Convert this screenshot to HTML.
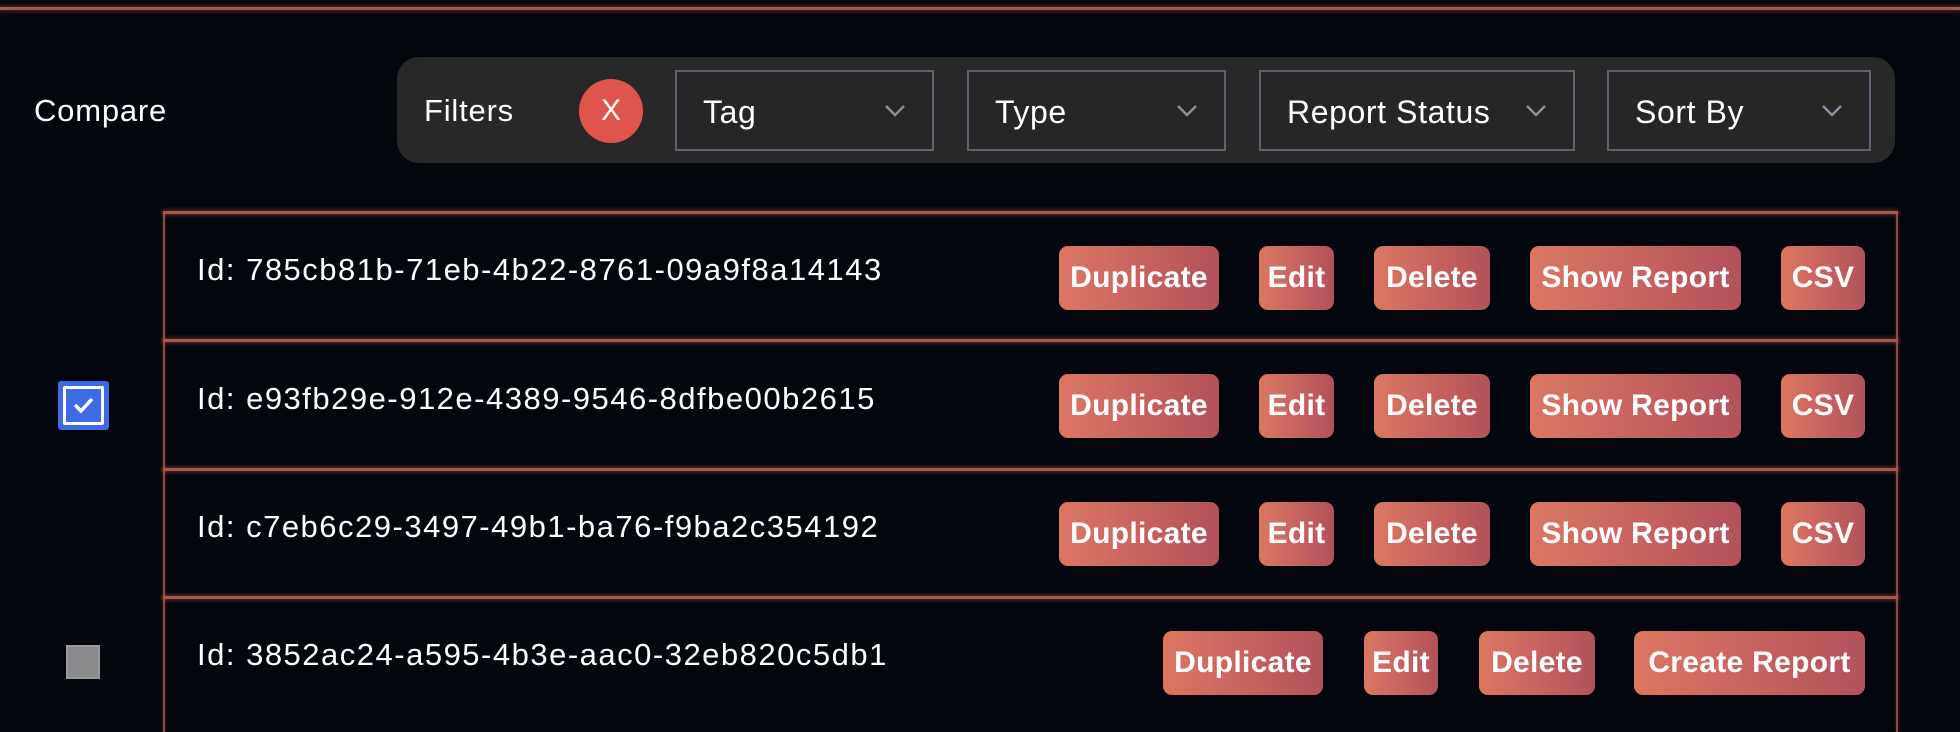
<!DOCTYPE html>
<html><head><meta charset="utf-8"><style>
*{box-sizing:border-box;margin:0;padding:0}
body{width:1960px;height:726px;background:#03060d;font-family:"Liberation Sans",sans-serif;color:#fff;position:relative;overflow:hidden}
.a{position:absolute}
.hl{position:absolute;height:3px;background:#a5584a;box-shadow:0 0 4px 1px rgba(200,100,80,.45)}
.vl{position:absolute;width:2px;background:#8a4a3f;box-shadow:0 0 3px rgba(200,100,80,.4)}
.t{position:absolute;font-size:31px;line-height:36px;white-space:nowrap;letter-spacing:0.8px}
.sel{position:absolute;top:70px;height:81px;border:2px solid #5d6272;background:#262626}
.sel span{position:absolute;left:26px;top:21px;font-size:32px;line-height:38px;letter-spacing:0.6px}
.sel svg{position:absolute;right:26px;top:32px}
.btn{position:absolute;height:64px;border-radius:9px;background:linear-gradient(90deg,#dc7662,#b2525b);font-size:30px;font-weight:bold;text-align:center;line-height:64px;letter-spacing:0.3px}
.id{position:absolute;left:197px;font-size:31px;line-height:36px;white-space:nowrap;letter-spacing:1.5px}
</style></head><body>
<div class="hl" style="left:0;right:0;top:7px"></div>
<div class="t" style="left:34px;top:93px">Compare</div>
<div class="a" style="left:397px;top:57px;width:1498px;height:106px;border-radius:22px;background:#282828"></div>
<div class="t" style="left:424px;top:93px">Filters</div>
<div class="a" style="left:579px;top:79px;width:64px;height:64px;border-radius:50%;background:#df544c;text-align:center;line-height:64px;font-size:30px">X</div>
<div class="sel" style="left:675px;width:259px"><span>Tag</span><svg width="22" height="14"><path d="M2 2l9 9 9-9" stroke="#8a8f9c" stroke-width="2.5" fill="none"/></svg></div>
<div class="sel" style="left:967px;width:259px"><span>Type</span><svg width="22" height="14"><path d="M2 2l9 9 9-9" stroke="#8a8f9c" stroke-width="2.5" fill="none"/></svg></div>
<div class="sel" style="left:1259px;width:316px"><span>Report Status</span><svg width="22" height="14"><path d="M2 2l9 9 9-9" stroke="#8a8f9c" stroke-width="2.5" fill="none"/></svg></div>
<div class="sel" style="left:1607px;width:264px"><span>Sort By</span><svg width="22" height="14"><path d="M2 2l9 9 9-9" stroke="#8a8f9c" stroke-width="2.5" fill="none"/></svg></div>

<div class="vl" style="left:163px;top:212px;height:520px"></div>
<div class="vl" style="left:1896px;top:212px;height:520px"></div>
<div class="hl" style="left:163px;width:1735px;top:211px"></div>
<div class="hl" style="left:163px;width:1735px;top:339px"></div>
<div class="hl" style="left:163px;width:1735px;top:468px"></div>
<div class="hl" style="left:163px;width:1735px;top:596px"></div>

<div class="id" style="top:252px">Id: 785cb81b-71eb-4b22-8761-09a9f8a14143</div>
<div class="id" style="top:381px">Id: e93fb29e-912e-4389-9546-8dfbe00b2615</div>
<div class="id" style="top:509px">Id: c7eb6c29-3497-49b1-ba76-f9ba2c354192</div>
<div class="id" style="top:637px">Id: 3852ac24-a595-4b3e-aac0-32eb820c5db1</div>

<div class="btn" style="left:1059px;top:246px;width:160px">Duplicate</div>
<div class="btn" style="left:1259px;top:246px;width:75px">Edit</div>
<div class="btn" style="left:1374px;top:246px;width:116px">Delete</div>
<div class="btn" style="left:1530px;top:246px;width:211px">Show Report</div>
<div class="btn" style="left:1781px;top:246px;width:84px">CSV</div>

<div class="btn" style="left:1059px;top:374px;width:160px">Duplicate</div>
<div class="btn" style="left:1259px;top:374px;width:75px">Edit</div>
<div class="btn" style="left:1374px;top:374px;width:116px">Delete</div>
<div class="btn" style="left:1530px;top:374px;width:211px">Show Report</div>
<div class="btn" style="left:1781px;top:374px;width:84px">CSV</div>

<div class="btn" style="left:1059px;top:502px;width:160px">Duplicate</div>
<div class="btn" style="left:1259px;top:502px;width:75px">Edit</div>
<div class="btn" style="left:1374px;top:502px;width:116px">Delete</div>
<div class="btn" style="left:1530px;top:502px;width:211px">Show Report</div>
<div class="btn" style="left:1781px;top:502px;width:84px">CSV</div>

<div class="btn" style="left:1163px;top:631px;width:160px">Duplicate</div>
<div class="btn" style="left:1364px;top:631px;width:74px">Edit</div>
<div class="btn" style="left:1479px;top:631px;width:116px">Delete</div>
<div class="btn" style="left:1634px;top:631px;width:231px">Create Report</div>

<div class="a" style="left:58px;top:381px;width:51px;height:49px;background:#3d6be6;border-radius:3px"></div>
<div class="a" style="left:63px;top:386px;width:41px;height:39px;border:3px solid #fff;background:#3d6be6;border-radius:2px"></div>
<svg class="a" style="left:71px;top:394px" width="25" height="22"><path d="M4 11l6 6 11-12" stroke="#fff" stroke-width="3.5" fill="none"/></svg>
<div class="a" style="left:66px;top:645px;width:34px;height:34px;background:#8a8a8c;border:2px solid #9a9a9c"></div>
</body></html>
